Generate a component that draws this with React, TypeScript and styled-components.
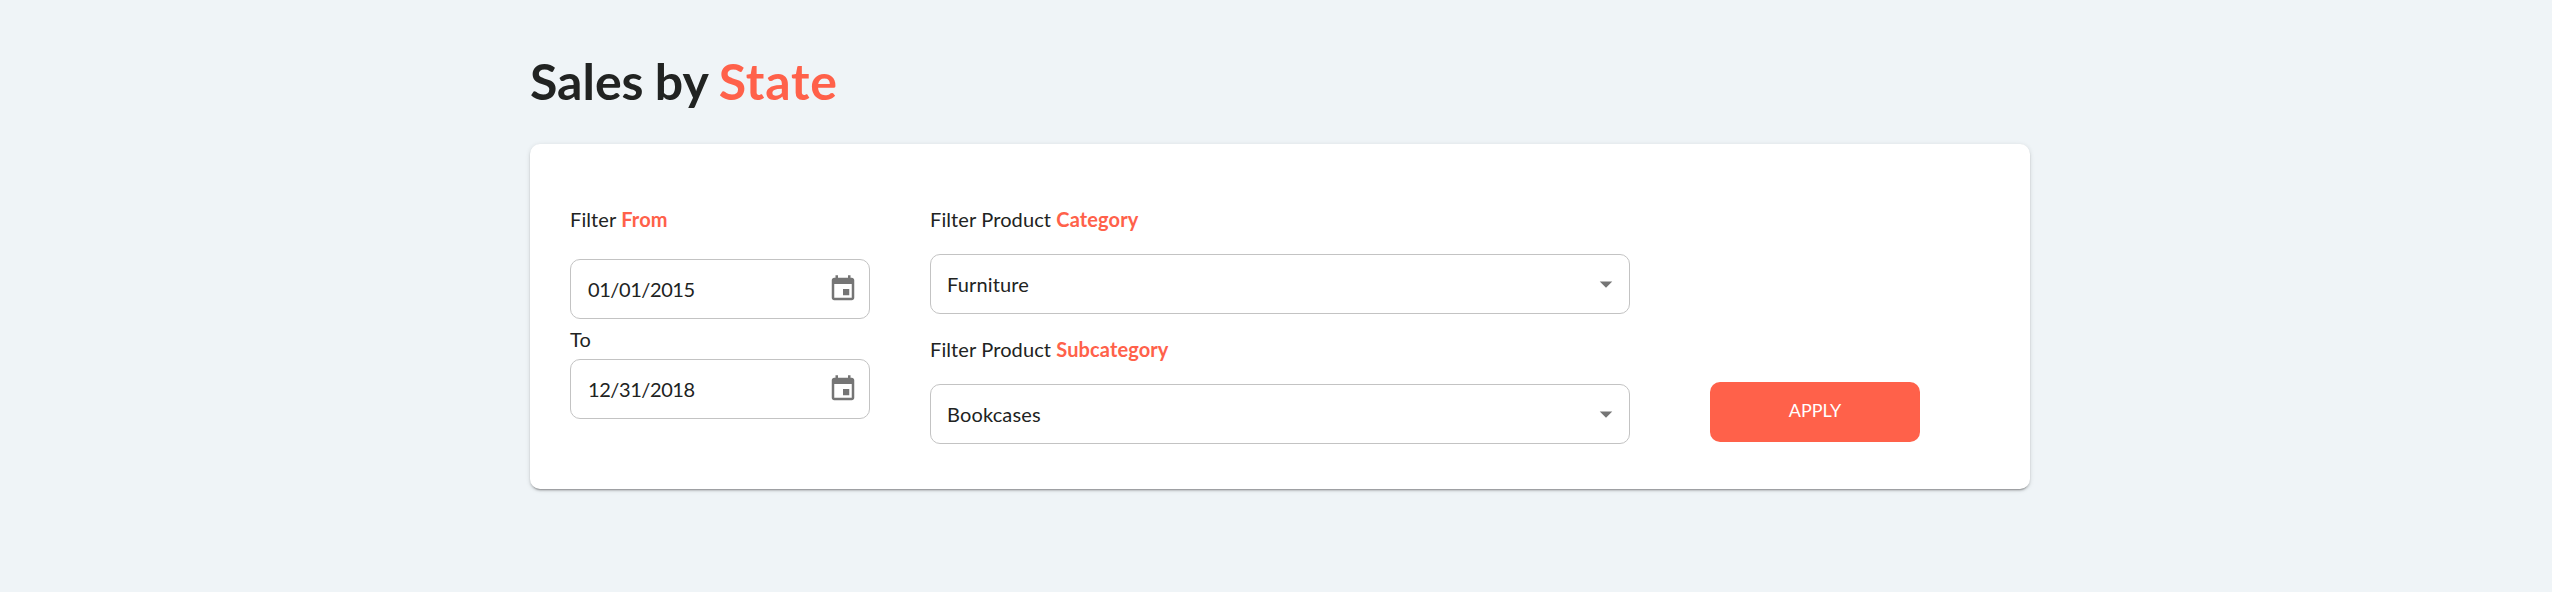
import React from 'react';
import styled, { createGlobalStyle } from 'styled-components';

const accent = '#ff614a';
const ink = '#212322';

const GlobalStyle = createGlobalStyle`
  *, *::before, *::after { box-sizing: border-box; }
  body {
    margin: 0;
    background: #eff4f7;
    color: ${ink};
    font-family: Lato, sans-serif;
    font-size: 20px;
    line-height: 30px;
  }
`;

const Page = styled.main`
  width: 1500px;
  min-height: 592px;
  margin-left: 530px;
  padding-top: 51px;
`;

const Highlight = styled.span`
  color: ${accent};
  font-weight: 700;
`;

const Title = styled.h1`
  margin: 0;
  height: 93px;
  font-size: 50px;
  line-height: 60px;
  font-weight: 700;
  word-spacing: -1px;

  ${Highlight} {
    letter-spacing: 0.8px;
  }
`;

const Card = styled.section`
  display: flex;
  align-items: flex-start;
  height: 345px;
  padding: 60px 40px 0;
  background: #fff;
  border-radius: 10px;
  box-shadow:
    0 3px 1px -2px rgba(0, 0, 0, 0.2),
    0 2px 2px 0 rgba(0, 0, 0, 0.14),
    0 1px 5px 0 rgba(0, 0, 0, 0.12);
`;

const DateColumn = styled.div`
  width: 300px;
  margin-right: 60px;
`;

const SelectColumn = styled.div`
  width: 700px;
  margin-right: 80px;
`;

const Label = styled.div<{ $gap: number }>`
  margin-bottom: ${({ $gap }) => $gap}px;
  letter-spacing: 0.11px;
`;

const Field = styled.div<{ $after?: number }>`
  display: flex;
  align-items: center;
  justify-content: space-between;
  height: 60px;
  margin-bottom: ${({ $after = 0 }) => $after}px;
  border: 1px solid #c3c3c3;
  border-radius: 10px;
`;

const DateField = styled(Field)`
  padding: 0 11px 0 17px;
  letter-spacing: -0.42px;
`;

const SelectField = styled(Field)`
  padding: 0 8px 0 16px;
  letter-spacing: 0.15px;
`;

const Icon = styled.svg`
  width: 30px;
  height: 30px;
  fill: #757575;
`;

const ApplyButton = styled.button`
  width: 210px;
  height: 60px;
  margin-top: 178px;
  padding: 0 0 4px;
  border: 0;
  border-radius: 10px;
  background: ${accent};
  color: #fff;
  font: 400 18px/30px Lato, sans-serif;
  text-transform: uppercase;
`;

const CalendarIcon = () => (
  <Icon viewBox="0 0 24 24">
    <path d="M17 12h-5v5h5v-5zM16 1v2H8V1H6v2H5c-1.11 0-1.99.9-1.99 2L3 19c0 1.1.89 2 2 2h14c1.1 0 2-.9 2-2V5c0-1.1-.9-2-2-2h-1V1h-2zm3 18H5V8h14v11z" />
  </Icon>
);

const ArrowIcon = () => (
  <Icon viewBox="0 0 24 24">
    <path d="M7 10l5 5 5-5z" />
  </Icon>
);

export default function App() {
  return (
    <>
      <GlobalStyle />
      <Page>
        <Title>
          Sales by <Highlight>State</Highlight>
        </Title>
        <Card>
          <DateColumn>
            <Label $gap={25}>
              Filter <Highlight>From</Highlight>
            </Label>
            <DateField $after={5}>
              01/01/2015
              <CalendarIcon />
            </DateField>
            <Label $gap={5}>To</Label>
            <DateField>
              12/31/2018
              <CalendarIcon />
            </DateField>
          </DateColumn>
          <SelectColumn>
            <Label $gap={20}>
              Filter Product <Highlight>Category</Highlight>
            </Label>
            <SelectField $after={20}>
              Furniture
              <ArrowIcon />
            </SelectField>
            <Label $gap={20}>
              Filter Product <Highlight>Subcategory</Highlight>
            </Label>
            <SelectField>
              Bookcases
              <ArrowIcon />
            </SelectField>
          </SelectColumn>
          <ApplyButton type="button">Apply</ApplyButton>
        </Card>
      </Page>
    </>
  );
}
